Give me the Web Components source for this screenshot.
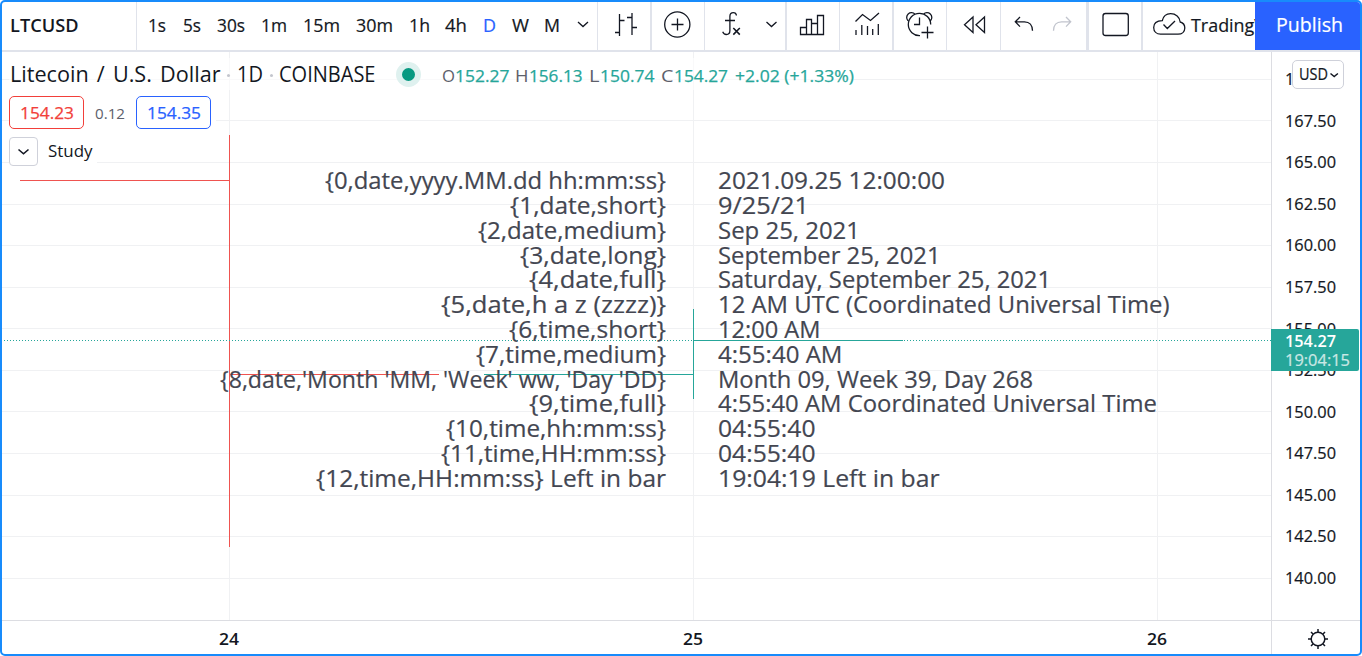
<!DOCTYPE html>
<html lang="en">
<head>
<meta charset="utf-8">
<title>LTCUSD</title>
<style>
html,body{margin:0;height:100%;overflow:hidden;background:#fff}
body{font-family:"Open Sans","Noto Sans",sans-serif;color:#131722}
</style>
</head>
<body>
<trading-app></trading-app>
<script>
const make = (name, html, init) => customElements.define(name, class extends HTMLElement {
  connectedCallback() {
    if (this.shadowRoot) return;
    this.attachShadow({mode: 'open'}).innerHTML = typeof html === 'function' ? html(this) : html;
    if (init) init(this, this.shadowRoot);
  }
});

/* Text squeezed to an exact width: w = width, s = font size, g = gap before it */
make('fit-text', `<style>
:host{display:block;flex:none;white-space:pre;line-height:24px}
span{display:inline-block;transform-origin:0 50%}
</style><span><slot></slot></span>`, (el, root) => {
  const w = +el.getAttribute('w');
  el.style.fontSize = el.getAttribute('s') + 'px';
  if (el.hasAttribute('g')) el.style.marginLeft = el.getAttribute('g') + 'px';
  const span = root.querySelector('span');
  const natural = span.getBoundingClientRect().width;
  el.style.width = w + 'px';
  span.style.transform = `scaleX(${w / natural})`;
});

/* One toolbar section: w = inner width, b = right border width */
make('tool-cell', el => `<style>
:host{display:flex;flex:none;box-sizing:content-box;align-items:center;height:48px;width:${el.getAttribute('w')}px;border-right:${el.getAttribute('b')}px solid #e0e3eb;overflow:hidden}
</style><slot></slot>`);

make('top-bar', `<style>
:host{display:flex;height:48px;border-bottom:2px solid #e0e3eb;overflow:hidden}
svg{display:block;flex:none;fill:none;stroke:#131722;stroke-width:1.3}
fit-text{margin-bottom:3px}
.sym{font-weight:600}
.on{color:#2962ff}
.pub{display:flex;flex:none;width:105px;height:48px;align-items:center;background:#2962ff;color:#fff}
.med{-webkit-text-stroke:.2px currentColor}
</style>
<tool-cell w="134" b="1"><fit-text class="sym" g="7.5" w="68.5" s="17.5">LTCUSD</fit-text></tool-cell>
<tool-cell w="460" b="1" class="med">
<fit-text g="11" w="18" s="17.5">1s</fit-text><fit-text g="16.5" w="18" s="17.5">5s</fit-text><fit-text g="16.5" w="28" s="17.5">30s</fit-text><fit-text g="16" w="26" s="17.5">1m</fit-text><fit-text g="16" w="37" s="17.5">15m</fit-text><fit-text g="16" w="37" s="17.5">30m</fit-text><fit-text g="16" w="21" s="17.5">1h</fit-text><fit-text g="15" w="22" s="17.5">4h</fit-text><fit-text class="on" g="15.5" w="13" s="17.5">D</fit-text><fit-text g="16" w="17" s="17.5">W</fit-text><fit-text g="15" w="16" s="17.5">M</fit-text>
<svg width="37" height="48" viewBox="560.5 2 37 48"><path d="M578.500 22l5 4.600 5-4.600"/></svg>
</tool-cell>
<tool-cell w="52" b="2"><svg width="52" height="48" viewBox="598 2 52 48"><path d="M619.500 14v22M615 32.500h4.500M619.500 20.500h5M632 13v22M627 17.500h5M632 27.500h5"/></svg></tool-cell>
<tool-cell w="52" b="1"><svg width="52" height="48" viewBox="652 2 52 48"><circle cx="677.300" cy="24.500" r="12.600"/><path d="M671.500 24.500h12M677.500 18.500v12"/></svg></tool-cell>
<tool-cell w="80" b="2"><svg width="80" height="48" viewBox="705 2 80 48"><path d="M736.500 15.500c-.3-1.900-1.500-2.900-3.200-2.900-2.200 0-3.300 1.400-3.400 3.500v14.400c0 2.600-1.300 4-3.600 4-2 0-3-1-3.600-2.700M725 20.500h10"/><path stroke-width="1.600" d="M733.300 28l6.500 6.600M739.800 28l-6.500 6.600"/><path d="M766.500 22l5 4.600 5-4.600"/></svg></tool-cell>
<tool-cell w="52" b="1"><svg width="52" height="48" viewBox="787 2 52 48"><path d="M800.500 27.500h6v7h-6zM806.500 19.500h5v15h-5zM811.500 23.500h6v11h-6zM817.500 15.500h6v19h-6z"/></svg></tool-cell>
<tool-cell w="52" b="2"><svg width="52" height="48" viewBox="840 2 52 48"><path d="M855.500 21.500l7-7 8 6 8.500-7.500M856 30v5M861.800 25v10M867.500 26v9M872.700 29v6M878.300 24v11"/></svg></tool-cell>
<tool-cell w="52" b="1"><svg width="52" height="48" viewBox="894 2 52 48"><path d="M920 35.700A11.200 11.200 0 1 1 930.700 24.500M908 20.800a4.700 4.700 0 1 1 7-6.600M930.500 20.800a4.700 4.700 0 1 0-7-6.600M914 24.500h5.500v-7M921.500 32.500h12M927.500 26.500v12"/></svg></tool-cell>
<tool-cell w="53" b="1"><svg width="53" height="48" viewBox="947 2 53 48"><path d="M973 17v15.500l-8.500-7.700zM984.500 17v15.500l-8.500-7.700z"/></svg></tool-cell>
<tool-cell w="85" b="3"><svg width="85" height="48" viewBox="1001 2 85 48"><path d="M1020 17l-4.700 4.800 4.700 4.800M1015.500 21.800h9c5 0 8 3.500 8 9"/><path stroke="#c1c4cd" d="M1066 17l4.700 4.800-4.700 4.800M1070.500 21.800h-9c-5 0-8 3.500-8 9"/></svg></tool-cell>
<tool-cell w="52" b="2"><svg width="52" height="48" viewBox="1089 2 52 48"><rect x="1103" y="13.500" width="25.300" height="22" rx="2.500"/></svg></tool-cell>
<tool-cell w="112" b="0" class="med"><svg width="47" height="48" viewBox="1143 2 47 48"><path d="M1160.500 34.200h17.500c4 0 6.800-2.500 6.800-6.200 0-3-1.700-5.200-4.600-6-.3-5-4.600-8.400-9.600-8.400-4.200 0-7.300 2.600-8.300 7-5 .2-8.600 2.600-8.600 6.800 0 4.200 3 6.800 6.800 6.800zM1163.500 24.500l3.800 4 7.700-7.500"/></svg><fit-text g="0.500" w="74" s="17.5">TradingV</fit-text></tool-cell>
<div class="pub med"><fit-text g="21" w="67" s="20">Publish</fit-text></div>
`);

make('chart-grid', `<style>:host{display:block;grid-area:1/1}svg{display:block}</style>
<svg width="1269" height="568" viewBox="2 52 1269 568" shape-rendering="crispEdges"><path id="g" fill="none" stroke="#f0f1f3"/></svg>`,
(el, root) => {
  const ys = [79,120,162,204,245,287,328,370,411,453,495,536,578];
  root.getElementById('g').setAttribute('d',
    ys.map(y => `M2 ${y}.5H1271`).join('') + [229,693,1157].map(x => `M${x}.5 52V620`).join(''));
});

make('price-bars', `<style>:host{display:block;grid-area:1/1}svg{display:block}</style>
<svg width="1269" height="568" viewBox="2 52 1269 568" fill="none" shape-rendering="crispEdges">
<path stroke="#ef5350" d="M20 180.500H229M229.500 135V547M230 374.500H439"/>
<path stroke="#26a69a" d="M484 374.500H693M693.500 309V399M694 340.500H903"/>
<path stroke="#26a69a" stroke-dasharray="1 2" d="M4 340.500H1271"/>
</svg>`);

/* Two text columns, patterns on the left and formatted values on the right */
make('format-table', `<style>
:host{display:grid;grid-area:1/1;grid-template-columns:663.5px 1fr;column-gap:52.500px;grid-auto-rows:24.770px;padding-top:116px;align-content:start;color:#434651}
div{display:flex;align-items:center}
.l{justify-content:flex-end}
fit-text{-webkit-text-stroke:.2px currentColor}
</style>`, (el, root) => {
  const rows = [
    ['{0,date,yyyy.MM.dd hh:mm:ss}',341,'2021.09.25 12:00:00',227],
    ['{1,date,short}',156,'9/25/21',91],
    ['{2,date,medium}',188,'Sep 25, 2021',142],
    ['{3,date,long}',146,'September 25, 2021',222.5],
    ['{4,date,full}',137,'Saturday, September 25, 2021',333],
    ['{5,date,h a z (zzzz)}',225,'12 AM UTC (Coordinated Universal Time)',451.5],
    ['{6,time,short}',157,'12:00 AM',102.5],
    ['{7,time,medium}',190,'4:55:40 AM',124.5],
    ["{8,date,'Month 'MM, 'Week' ww, 'Day 'DD}",446,'Month 09, Week 39, Day 268',315],
    ['{9,time,full}',137,'4:55:40 AM Coordinated Universal Time',439],
    ['{10,time,hh:mm:ss}',220,'04:55:40',97.5],
    ['{11,time,HH:mm:ss}',225,'04:55:40',97.5],
    ['{12,time,HH:mm:ss} Left in bar',350,'19:04:19 Left in bar',221.5]];
  root.innerHTML += rows.map(r =>
    `<div class="l"><fit-text w="${r[1]}" s="24.5">${r[0]}</fit-text></div><div><fit-text w="${r[3]}" s="24.5">${r[2]}</fit-text></div>`).join('');
});

make('chart-legend', `<style>
:host{display:flex;flex-direction:column;grid-area:1/1;align-items:flex-start;padding-left:7px}
.row{display:flex;align-items:center;height:32px;margin-top:6px;background:rgba(255,255,255,.6)}
.row.two{height:33px;margin-top:6px;background:#fff;padding-right:5px}
.row.three{height:30px;margin-top:7px;background:#fff;padding-right:5px}
.dot{width:3px;height:3px;border-radius:50%;background:#c4c6ce;margin:3px 0 0 6.500px}
.status{box-sizing:border-box;width:25px;height:25px;border-radius:50%;border:6.500px solid #dff1ef;background:#089981;margin-left:20.500px}
.price{box-sizing:border-box;display:flex;align-items:center;width:75px;height:33px;border:1px solid #f23f3a;border-radius:5px;color:#f23f3a;background:#fff}
.ask{border-color:#2962ff;color:#2962ff;margin-left:11px}
.k{color:#5d606b}.v{color:#26a69a}
.row:not(.two):not(.three) .k,.v{margin-top:3px}
.wide{word-spacing:2.500px}
.m{-webkit-text-stroke:.25px currentColor}
.btn{box-sizing:border-box;width:29px;height:29px;border:1px solid #cfd1da;border-radius:4px}
svg{display:block;fill:none;stroke:#131722;stroke-width:1.600}
</style>
<div class="row"><fit-text class="wide" g="1" w="210.5" s="21.5">Litecoin / U.S. Dollar</fit-text><i class="dot"></i><fit-text g="7" w="26" s="21.5">1D</fit-text><i class="dot"></i><fit-text g="6" w="96.5" s="21.5">COINBASE</fit-text><i class="status"></i>
<fit-text class="k" g="21" w="13" s="17">O</fit-text><fit-text class="v m" w="54.5" s="17">152.27</fit-text>
<fit-text class="k" g="6" w="13.5" s="17">H</fit-text><fit-text class="v m" w="53.5" s="17">156.13</fit-text>
<fit-text class="k" g="7" w="10.5" s="17">L</fit-text><fit-text class="v m" w="54.5" s="17">150.74</fit-text>
<fit-text class="k" g="7" w="12.5" s="17">C</fit-text><fit-text class="v m" w="54" s="17">154.27</fit-text>
<fit-text class="v m" g="7.500" w="119" s="17">+2.02 (+1.33%)</fit-text></div>
<div class="row two"><div class="price m"><fit-text g="9.500" w="54" s="17">154.23</fit-text></div><fit-text class="k" g="11" w="30" s="15">0.12</fit-text><div class="price ask m"><fit-text g="9.500" w="54" s="17">154.35</fit-text></div></div>
<div class="row three"><div class="btn"><svg width="27" height="27"><path d="M8.500 11.500l5 4.300 5-4.300"/></svg></div><fit-text g="9.500" w="44.5" s="17">Study</fit-text></div>
`);

make('chart-pane', `<style>:host{display:grid;grid-template:568px/1269px;overflow:hidden}</style>
<chart-grid></chart-grid><format-table></format-table><price-bars></price-bars><chart-legend></chart-legend>`);

make('price-axis', `<style>
:host{display:block;position:relative;height:568px;border-left:1px solid #dcdde2}
.list{display:flex;flex-direction:column;padding-top:6.500px}
.list div{flex:none;height:41.560px;display:flex;align-items:center}
.m{-webkit-text-stroke:.2px currentColor}
.cur{position:absolute;left:20px;top:8px;box-sizing:border-box;width:52px;height:29px;border:1px solid #cfd1da;border-radius:5px;background:#fff;display:flex;align-items:center}
.cur fit-text{margin-bottom:2px}
.tag{position:absolute;left:-1px;top:277px;width:88px;height:42px;background:#26a69a;border-radius:0 2px 2px 0;color:#fff}
.tag fit-text{line-height:19px}
.tag .a{margin-top:2.500px;font-weight:600}.tag .b{opacity:.75}
svg{fill:none;stroke:#131722;stroke-width:1.500}
</style><div class="list m"></div>
<div class="cur m"><fit-text g="6" w="29" s="15.500">USD</fit-text><svg width="12" height="12"><path d="M2.500 4.500l3.700 3 3.700-3"/></svg></div>
<div class="tag"><fit-text class="a" g="14" w="51" s="15.500">154.27</fit-text><fit-text class="b m" g="14" w="65" s="15.500">19:04:15</fit-text></div>`,
(el, root) => {
  let s = '';
  for (let p = 170; p >= 140; p -= 2.5) s += `<div><fit-text g="13" w="51" s="15.500">${p.toFixed(2)}</fit-text></div>`;
  root.querySelector('.list').innerHTML = s;
});

make('time-axis', `<style>
:host{display:flex;align-items:center;height:33px;border-top:1px solid #dcdde2;font-weight:600}
fit-text{margin-top:2px}
</style><fit-text g="217" w="20" s="15.500">24</fit-text><fit-text g="444" w="20" s="15.500">25</fit-text><fit-text g="444" w="20" s="15.500">26</fit-text>`);

make('axis-settings', `<style>
:host{display:block;height:33px;border-top:1px solid #dcdde2;border-left:1px solid #dcdde2}
svg{display:block;fill:none;stroke:#131722;stroke-width:1.500}
</style><svg width="88" height="33" viewBox="1272 621 88 33"><circle cx="1318" cy="639" r="6.800"/><path d="M1318 632v-3M1318 646v3M1311 639h-3M1325 639h3M1313 634l-2-2M1323 634l2-2M1313 644l-2 2M1323 644l2 2"/></svg>`);

make('trading-app', `<style>
:host{display:flex;flex-direction:column;box-sizing:border-box;width:1362px;height:656px;border:2px solid #188bfb;border-radius:5px;overflow:hidden;background:#fff}
main{display:grid;grid-template:568px 34px/1269px 89px}
</style>
<top-bar></top-bar>
<main><chart-pane></chart-pane><price-axis></price-axis><time-axis></time-axis><axis-settings></axis-settings></main>`);
</script>
</body>
</html>
